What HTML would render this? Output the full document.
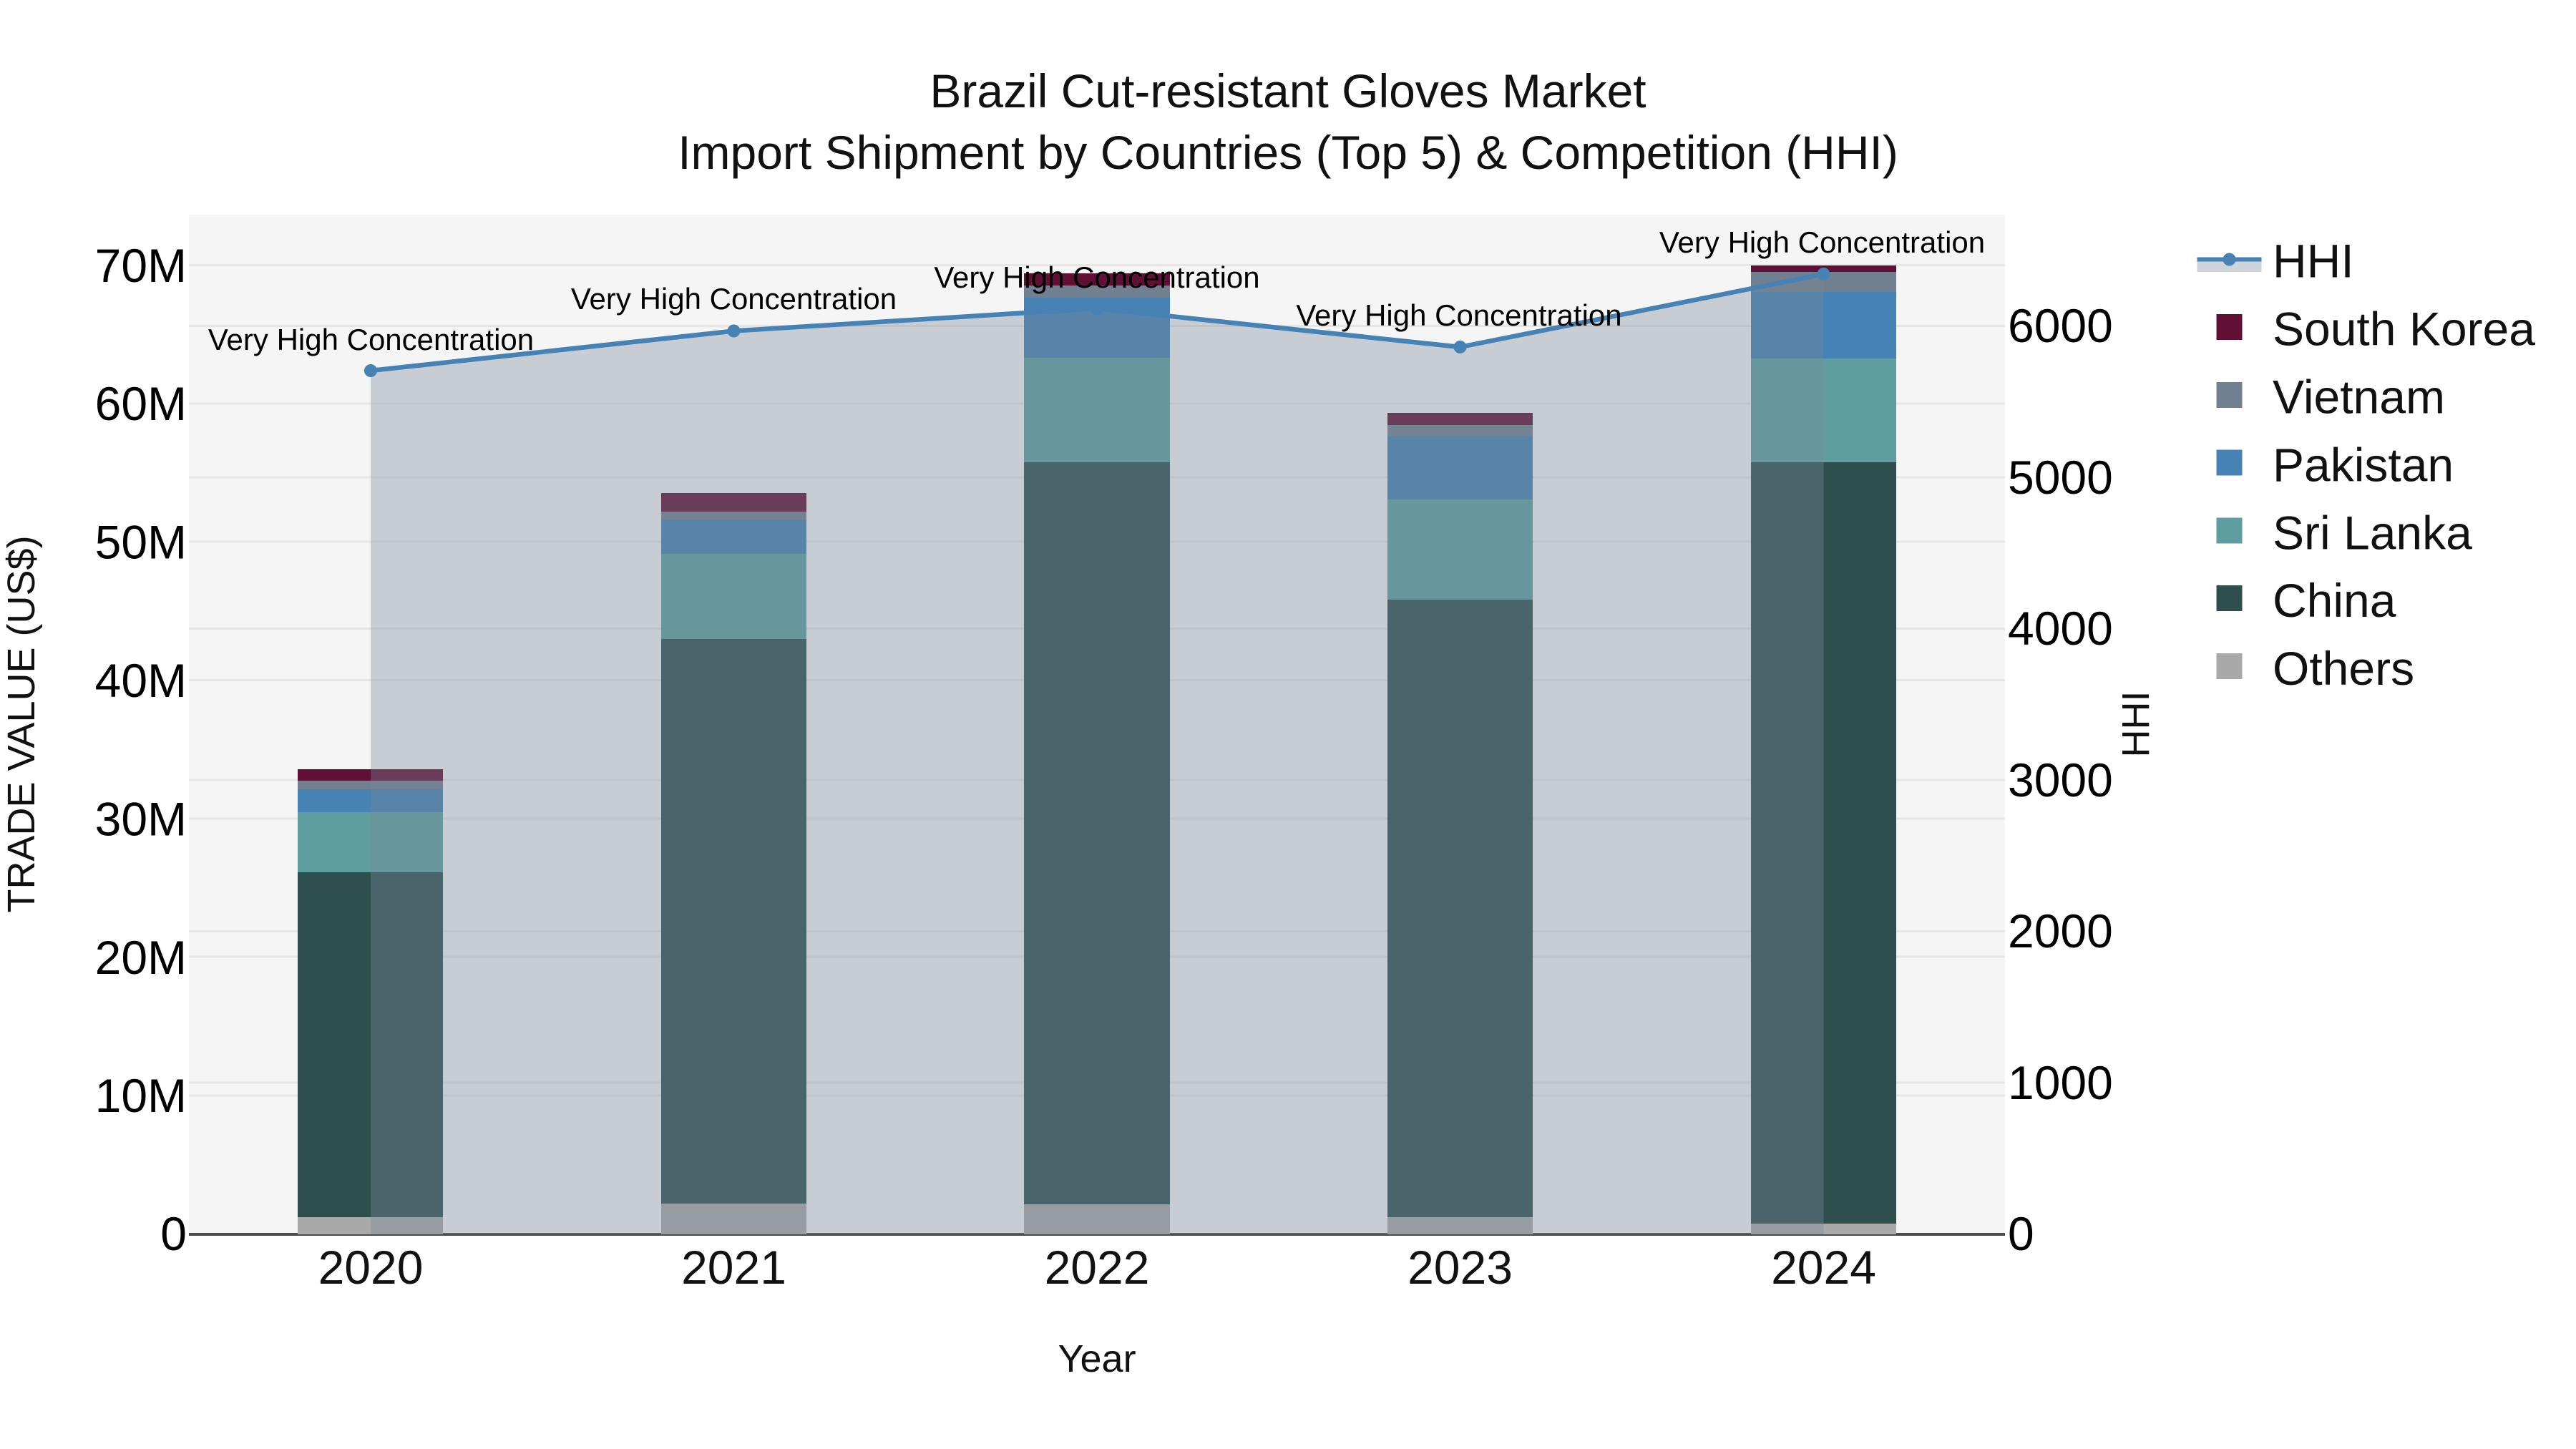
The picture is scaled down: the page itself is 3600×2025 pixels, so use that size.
<!DOCTYPE html>
<html>
<head>
<meta charset="utf-8">
<style>
html,body{margin:0;padding:0;background:#fff;width:3600px;height:2025px;overflow:hidden}
svg{display:block}
text{font-family:"Liberation Sans",Arial,sans-serif}
</style>
</head>
<body>
<svg width="3600" height="2025" viewBox="0 0 3600 2025" xmlns="http://www.w3.org/2000/svg">
<rect width="3600" height="2025" fill="#fff"/>
<rect x="264" y="300" width="2538" height="1425" fill="#f5f5f5"/>
<g stroke="#e6e6e6" stroke-width="3" fill="none">
<path d="M264 370.5H2802M264 564H2802M264 757H2802M264 950.5H2802M264 1144H2802M264 1337H2802M264 1531H2802"/>
<path d="M264 455.5H2802M264 667H2802M264 878.5H2802M264 1090H2802M264 1301.5H2802M264 1513H2802"/>
</g>
<rect x="264" y="1723" width="2538" height="4" fill="#4c4c4c"/>
<!-- bars -->
<g>
<rect x="416" y="1075" width="203" height="16" fill="#601035"/>
<rect x="416" y="1091" width="203" height="12" fill="#708090"/>
<rect x="416" y="1103" width="203" height="32" fill="#4682b4"/>
<rect x="416" y="1135" width="203" height="84" fill="#5f9ea0"/>
<rect x="416" y="1219" width="203" height="482" fill="#2f4f4f"/>
<rect x="416" y="1701" width="203" height="24" fill="#a9a9a9"/>

<rect x="924" y="689" width="203" height="26" fill="#601035"/>
<rect x="924" y="715" width="203" height="12" fill="#708090"/>
<rect x="924" y="727" width="203" height="47" fill="#4682b4"/>
<rect x="924" y="774" width="203" height="119" fill="#5f9ea0"/>
<rect x="924" y="893" width="203" height="789" fill="#2f4f4f"/>
<rect x="924" y="1682" width="203" height="43" fill="#a9a9a9"/>

<rect x="1431" y="382" width="204" height="17" fill="#601035"/>
<rect x="1431" y="399" width="204" height="17" fill="#708090"/>
<rect x="1431" y="416" width="204" height="84" fill="#4682b4"/>
<rect x="1431" y="500" width="204" height="146" fill="#5f9ea0"/>
<rect x="1431" y="646" width="204" height="1037" fill="#2f4f4f"/>
<rect x="1431" y="1683" width="204" height="42" fill="#a9a9a9"/>

<rect x="1939" y="577" width="203" height="17" fill="#601035"/>
<rect x="1939" y="594" width="203" height="16" fill="#708090"/>
<rect x="1939" y="610" width="203" height="88" fill="#4682b4"/>
<rect x="1939" y="698" width="203" height="140" fill="#5f9ea0"/>
<rect x="1939" y="838" width="203" height="863" fill="#2f4f4f"/>
<rect x="1939" y="1701" width="203" height="24" fill="#a9a9a9"/>

<rect x="2447" y="371" width="203" height="9" fill="#601035"/>
<rect x="2447" y="380" width="203" height="28" fill="#708090"/>
<rect x="2447" y="408" width="203" height="93" fill="#4682b4"/>
<rect x="2447" y="501" width="203" height="145" fill="#5f9ea0"/>
<rect x="2447" y="646" width="203" height="1064" fill="#2f4f4f"/>
<rect x="2447" y="1710" width="203" height="15" fill="#a9a9a9"/>
</g>
<!-- area -->
<path d="M518 518L1025.5 462.5L1533 431L2040.5 485L2548.5 383V1725H518Z" fill="rgb(121,136,153)" fill-opacity="0.364"/>
<path d="M518 518L1025.5 462.5L1533 431L2040.5 485L2548.5 383" fill="none" stroke="#4682b4" stroke-width="6.5" stroke-linejoin="round"/>
<g fill="#4682b4">
<circle cx="518" cy="518" r="9"/>
<circle cx="1025.5" cy="462.5" r="9"/>
<circle cx="1533" cy="431" r="9"/>
<circle cx="2040.5" cy="485" r="9"/>
<circle cx="2548.5" cy="383" r="9"/>
</g>
<!-- annotations -->
<g font-size="42" text-anchor="middle" fill="#000">
<text x="518.5" y="489">Very High Concentration</text>
<text x="1025.5" y="432">Very High Concentration</text>
<text x="1533" y="402">Very High Concentration</text>
<text x="2039" y="455">Very High Concentration</text>
<text x="2546.5" y="353">Very High Concentration</text>
</g>
<!-- title -->
<g font-size="66" text-anchor="middle" fill="#111">
<text x="1800" y="150">Brazil Cut-resistant Gloves Market</text>
<text x="1800" y="236">Import Shipment by Countries (Top 5) &amp; Competition (HHI)</text>
</g>
<!-- left ticks -->
<g font-size="66" text-anchor="end" fill="#000">
<text x="261" y="394">70M</text>
<text x="261" y="587">60M</text>
<text x="261" y="780.5">50M</text>
<text x="261" y="974">40M</text>
<text x="261" y="1167.5">30M</text>
<text x="261" y="1361">20M</text>
<text x="261" y="1554">10M</text>
<text x="261" y="1747">0</text>
</g>
<!-- right ticks -->
<g font-size="66" fill="#000">
<text x="2806" y="478">6000</text>
<text x="2806" y="690">5000</text>
<text x="2806" y="901">4000</text>
<text x="2806" y="1113">3000</text>
<text x="2806" y="1324">2000</text>
<text x="2806" y="1536">1000</text>
<text x="2806" y="1747">0</text>
</g>
<!-- x ticks -->
<g font-size="66" text-anchor="middle" fill="#111">
<text x="518" y="1794">2020</text>
<text x="1025.5" y="1794">2021</text>
<text x="1533" y="1794">2022</text>
<text x="2040.5" y="1794">2023</text>
<text x="2548.5" y="1794">2024</text>
</g>
<!-- axis titles -->
<text x="1533" y="1917" font-size="54" text-anchor="middle" fill="#111">Year</text>
<text transform="translate(48 1012) rotate(-90)" font-size="54" text-anchor="middle" fill="#111">TRADE VALUE (US$)</text>
<text transform="translate(3003 1012) rotate(-90)" font-size="54" text-anchor="middle" fill="#111">HHI</text>
<!-- legend -->
<rect x="3070.5" y="362" width="90" height="18" fill="rgb(121,136,153)" fill-opacity="0.364"/>
<path d="M3070.5 362.5H3160.5" stroke="#4682b4" stroke-width="6" fill="none"/>
<circle cx="3115.5" cy="362.5" r="9" fill="#4682b4"/>
<rect x="3097.5" y="439" width="36" height="36" fill="#601035"/>
<rect x="3097.5" y="534" width="36" height="36" fill="#708090"/>
<rect x="3097.5" y="628.5" width="36" height="36" fill="#4682b4"/>
<rect x="3097.5" y="723.5" width="36" height="36" fill="#5f9ea0"/>
<rect x="3097.5" y="818" width="36" height="36" fill="#2f4f4f"/>
<rect x="3097.5" y="913" width="36" height="36" fill="#a9a9a9"/>
<g font-size="66" fill="#111">
<text x="3176" y="387.5">HHI</text>
<text x="3176" y="482.5">South Korea</text>
<text x="3176" y="577.5">Vietnam</text>
<text x="3176" y="672.5">Pakistan</text>
<text x="3176" y="767.5">Sri Lanka</text>
<text x="3176" y="862">China</text>
<text x="3176" y="957">Others</text>
</g>
</svg>
</body>
</html>
